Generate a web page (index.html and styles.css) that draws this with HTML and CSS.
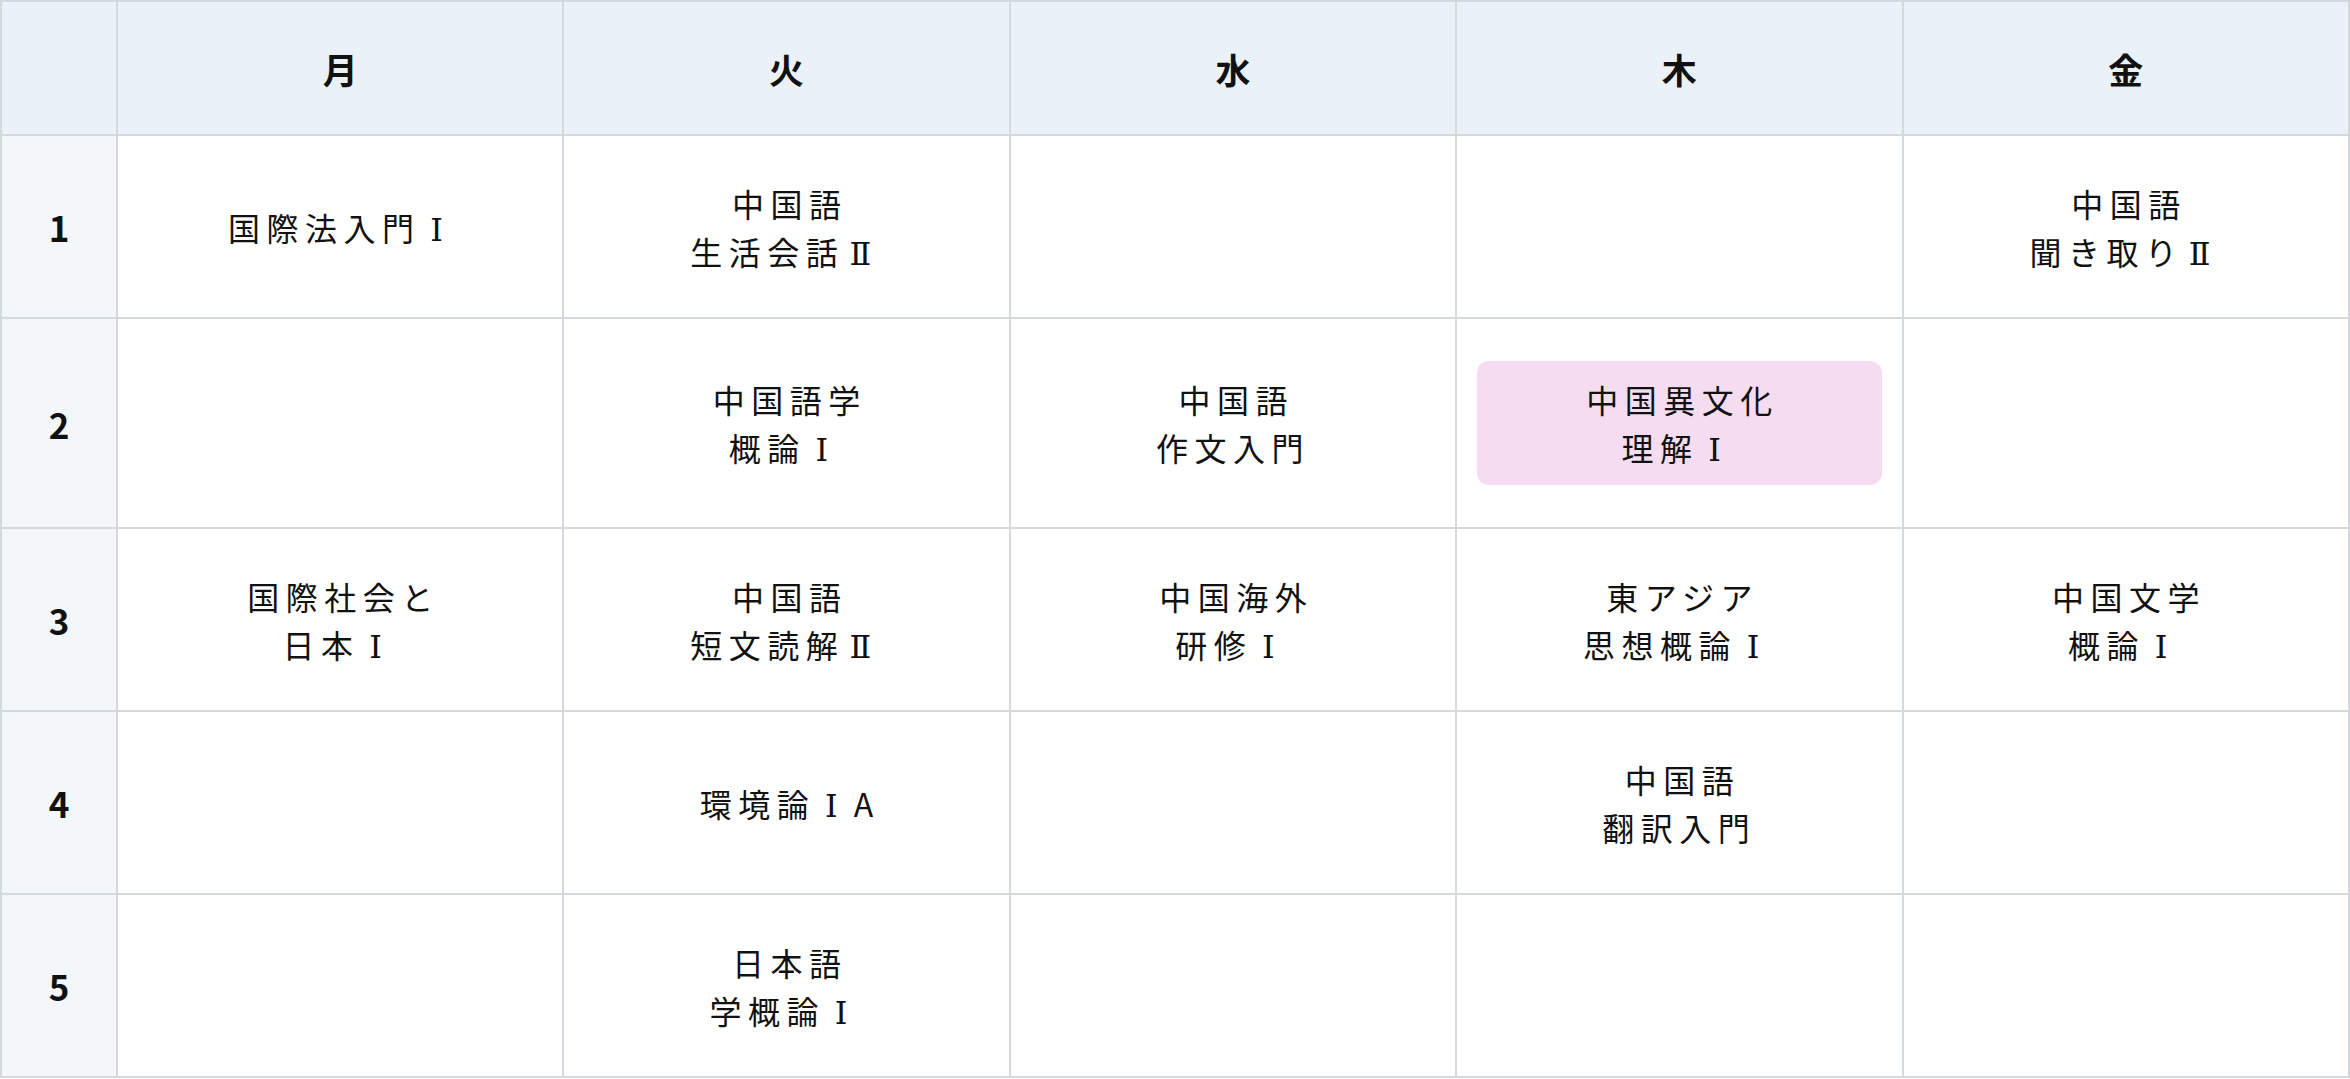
FILE: index.html
```html
<!DOCTYPE html>
<html lang="ja">
<head>
<meta charset="utf-8">
<title>時間割</title>
<link rel="stylesheet" href="styles.css">
</head>
<body>
<table class="timetable">
  <colgroup>
    <col class="col-period">
    <col class="col-day"><col class="col-day"><col class="col-day"><col class="col-day"><col class="col-day">
  </colgroup>
  <thead>
    <tr>
      <th class="corner"></th>
      <th class="day">月</th>
      <th class="day">火</th>
      <th class="day">水</th>
      <th class="day">木</th>
      <th class="day">金</th>
    </tr>
  </thead>
  <tbody>
    <tr>
      <th class="period">1</th>
      <td><div class="course">国際法入門<span class="roman">Ⅰ</span></div></td>
      <td><div class="course">中国語<br>生活会話<span class="roman">Ⅱ</span></div></td>
      <td></td>
      <td></td>
      <td><div class="course">中国語<br>聞き取り<span class="roman">Ⅱ</span></div></td>
    </tr>
    <tr>
      <th class="period">2</th>
      <td></td>
      <td><div class="course">中国語学<br>概論<span class="roman">Ⅰ</span></div></td>
      <td><div class="course">中国語<br>作文入門</div></td>
      <td><div class="course highlight">中国異文化<br>理解<span class="roman">Ⅰ</span></div></td>
      <td></td>
    </tr>
    <tr>
      <th class="period">3</th>
      <td><div class="course">国際社会と<br>日本<span class="roman">Ⅰ</span></div></td>
      <td><div class="course">中国語<br>短文読解<span class="roman">Ⅱ</span></div></td>
      <td><div class="course">中国海外<br>研修<span class="roman">Ⅰ</span></div></td>
      <td><div class="course">東アジア<br>思想概論<span class="roman">Ⅰ</span></div></td>
      <td><div class="course">中国文学<br>概論<span class="roman">Ⅰ</span></div></td>
    </tr>
    <tr>
      <th class="period">4</th>
      <td></td>
      <td><div class="course">環境論<span class="roman">Ⅰ</span>A</div></td>
      <td></td>
      <td><div class="course">中国語<br>翻訳入門</div></td>
      <td></td>
    </tr>
    <tr>
      <th class="period">5</th>
      <td></td>
      <td><div class="course">日本語<br>学概論<span class="roman">Ⅰ</span></div></td>
      <td></td>
      <td></td>
      <td></td>
    </tr>
  </tbody>
</table>
</body>
</html>
```
FILE: styles.css
```css
html, body {
  margin: 0;
  padding: 0;
  background: #ffffff;
}

body {
  font-family: "Noto Sans CJK JP", "Noto Sans", sans-serif;
  color: #111111;
}

.timetable {
  width: 2350px;
  border-collapse: collapse;
  table-layout: fixed;
  border: 2px solid #d4d9dd;
}

.col-period {
  width: 116px;
}

.timetable th,
.timetable td {
  border: 2px solid #d4d9dd;
  text-align: center;
  vertical-align: middle;
}

.timetable thead th {
  background: #eaf2f8;
  height: 132px;
  padding: 0;
  font-size: 35px;
  font-weight: 700;
  line-height: 1.4;
}

.timetable .period {
  background: #f3f7fa;
  font-size: 35px;
  font-weight: 700;
  padding: 0;
}

.timetable td {
  height: 97px;
  padding: 42px 20px;
}

.course {
  font-size: 32px;
  line-height: 48px;
  letter-spacing: 6.5px;
  text-indent: 6.5px;
}

.roman {
  display: inline-block;
  width: 1em;
  margin-right: 6.5px;
  font-family: "DejaVu Serif", serif;
  line-height: 1;
  letter-spacing: 0;
  text-indent: 0;
  text-align: center;
}

.course.highlight {
  background: #f6dcf1;
  border-radius: 12px;
  padding: 14px 0;
}
```
